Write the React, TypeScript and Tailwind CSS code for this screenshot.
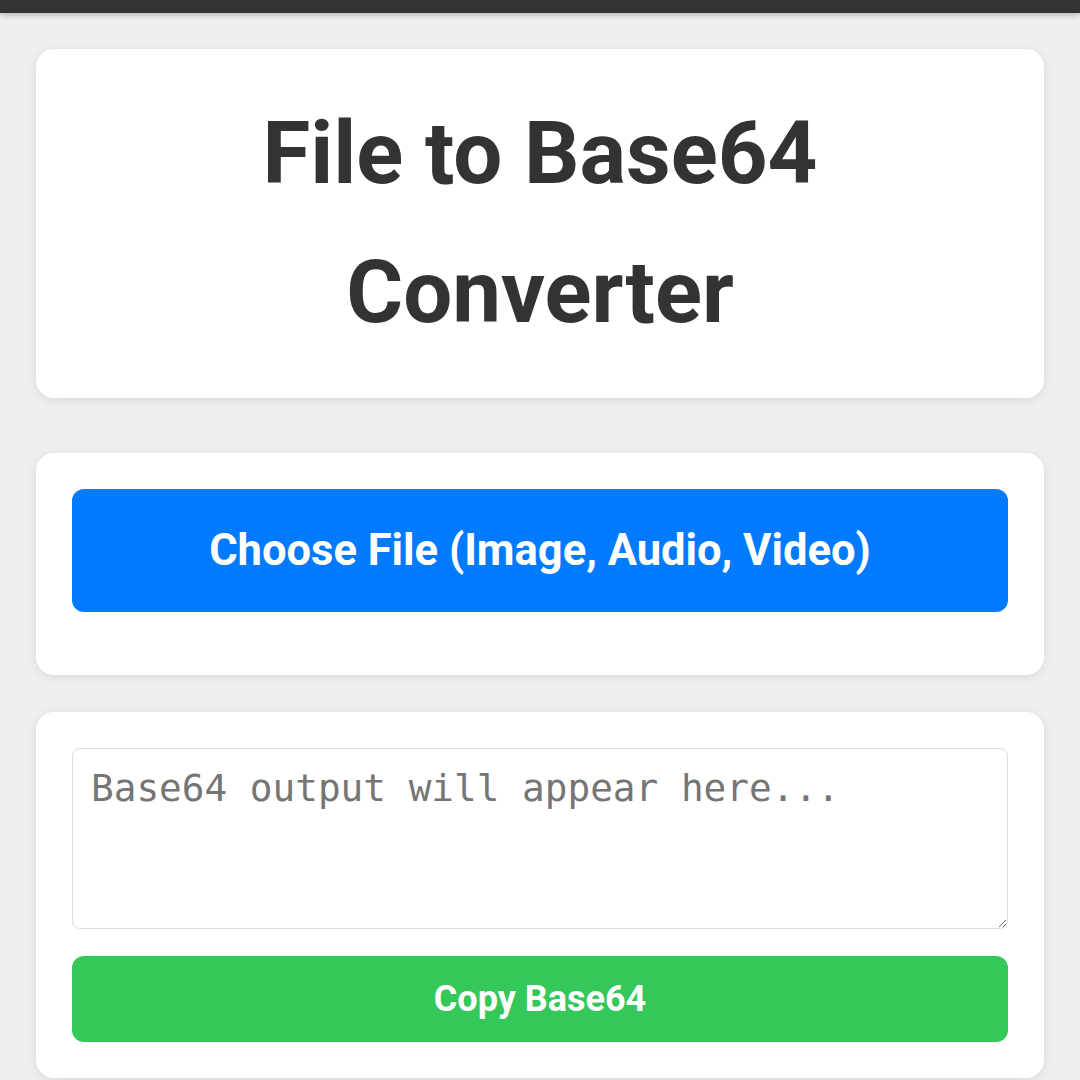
export default function App() {
  return (
    <div className="min-h-screen bg-[#efefef] font-['Roboto',sans-serif]">
      <div className="h-[13px] bg-[#333333] shadow-[0_2px_6px_rgba(0,0,0,0.25)]" />

      <div className="px-[36px] pt-[36px] pb-[4px]">
        <div className="bg-white rounded-[18px] shadow-[0_2px_10px_rgba(0,0,0,0.1)] pt-[35px] pb-[36px] px-[36px]">
          <h1 className="text-center text-[#333333] font-bold text-[87px] leading-[139px]">
            File to Base64
            <br />
            Converter
          </h1>
        </div>

        <div className="mt-[55px] bg-white rounded-[18px] shadow-[0_2px_10px_rgba(0,0,0,0.1)] pt-[36px] pb-[63px] px-[36px]">
          <button className="w-full h-[123px] rounded-[12px] bg-[#007bff] text-white font-bold text-[43.5px]">
            Choose File (Image, Audio, Video)
          </button>
        </div>

        <div className="mt-[37px] bg-white rounded-[18px] shadow-[0_2px_10px_rgba(0,0,0,0.1)] p-[36px]">
          <textarea
            placeholder="Base64 output will appear here..."
            className="block w-full h-[181px] rounded-[8px] border border-[#dddddd] px-[18px] py-[13px] font-['DejaVu_Sans_Mono',monospace] text-[37.7px] leading-[52px] text-[#333333] placeholder:text-[#757575] outline-none"
          />
          <button className="mt-[27px] w-full h-[86px] rounded-[12px] bg-[#34c759] text-white font-bold text-[36px]">
            Copy Base64
          </button>
        </div>
      </div>
    </div>
  );
}
